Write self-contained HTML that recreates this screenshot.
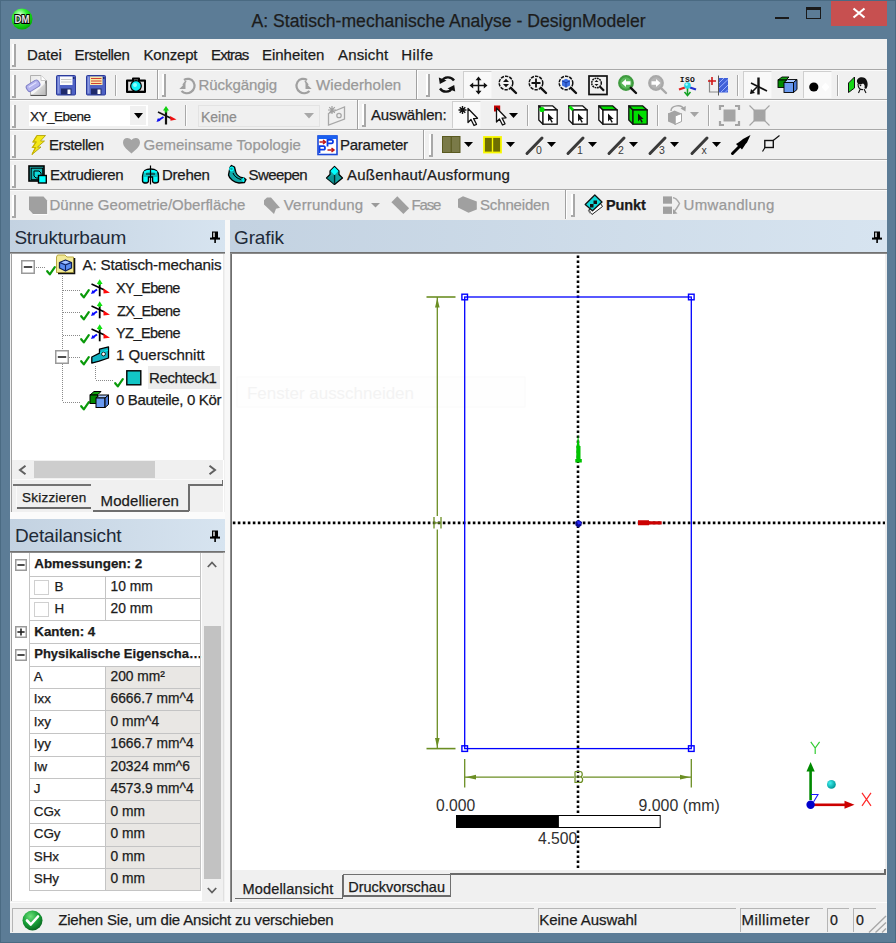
<!DOCTYPE html>
<html><head><meta charset="utf-8"><style>
html,body{margin:0;padding:0;width:896px;height:943px;overflow:hidden;background:#5c7c96}
.t{position:absolute;white-space:nowrap;line-height:1;font-family:"Liberation Sans", sans-serif;-webkit-text-stroke:0.25px currentColor}
svg{overflow:visible}
</style></head><body><div style="position:relative;width:896px;height:943px;overflow:hidden">
<div style="position:absolute;left:0px;top:0px;width:896px;height:943px;background:#5c7c96"></div>
<div style="position:absolute;left:0px;top:0px;width:896px;height:943px;border:1px solid #4a6a82;box-sizing:border-box"></div>
<svg style="position:absolute;left:11px;top:8px;" width="22" height="22" viewBox="0 0 22 22"><defs><radialGradient id="dmg" cx="40%" cy="30%" r="70%"><stop offset="0" stop-color="#e0ffe0"/><stop offset=".45" stop-color="#30f030"/><stop offset="1" stop-color="#00b000"/></radialGradient></defs><circle cx="11" cy="11" r="10.5" fill="url(#dmg)"/><text x="11" y="15.3" text-anchor="middle" font-family="Liberation Sans" font-weight="700" font-size="10.5" textLength="15" lengthAdjust="spacingAndGlyphs" fill="#e8e8e8" stroke="#000" stroke-width="2" paint-order="stroke">DM</text></svg>
<div class="t" style="left:251.50px;top:13px;font-size:17.6px;color:#1c1c1c;font-weight:400;">A: Statisch-mechanische Analyse - DesignModeler</div>
<div style="position:absolute;left:775px;top:17px;width:14px;height:2px;background:#1a1a1a"></div>
<div style="position:absolute;left:806px;top:7px;width:15px;height:12px;border:1px solid #1a1a1a;border-top-width:3px;box-sizing:border-box"></div>
<div style="position:absolute;left:831px;top:1px;width:56px;height:25px;background:#c75050"></div>
<svg style="position:absolute;left:852px;top:7px;" width="14" height="12" viewBox="0 0 14 12"><path d="M1.5 1.5 L12.5 10.5 M12.5 1.5 L1.5 10.5" stroke="#fff" stroke-width="2.2"/></svg>
<div style="position:absolute;left:10px;top:39px;width:877px;height:894px;background:#f0f0f0"></div>
<div style="position:absolute;left:10px;top:69px;width:877px;height:1px;background:#a9a9a9"></div>
<div style="position:absolute;left:10px;top:70px;width:877px;height:1px;background:#fbfbfb"></div>
<div style="position:absolute;left:10px;top:99px;width:877px;height:1px;background:#a9a9a9"></div>
<div style="position:absolute;left:10px;top:100px;width:877px;height:1px;background:#fbfbfb"></div>
<div style="position:absolute;left:10px;top:129px;width:877px;height:1px;background:#a9a9a9"></div>
<div style="position:absolute;left:10px;top:130px;width:877px;height:1px;background:#fbfbfb"></div>
<div style="position:absolute;left:10px;top:159px;width:877px;height:1px;background:#a9a9a9"></div>
<div style="position:absolute;left:10px;top:160px;width:877px;height:1px;background:#fbfbfb"></div>
<div style="position:absolute;left:10px;top:189px;width:877px;height:1px;background:#a9a9a9"></div>
<div style="position:absolute;left:10px;top:190px;width:877px;height:1px;background:#fbfbfb"></div>
<div style="position:absolute;left:12px;top:44px;width:2px;height:22px;background:#ffffff"></div>
<div style="position:absolute;left:14px;top:44px;width:1.5px;height:22px;background:#a8a8a8"></div>
<div style="position:absolute;left:12px;top:65px;width:3.5px;height:1.5px;background:#a8a8a8"></div>
<div style="position:absolute;left:12px;top:75px;width:2px;height:22px;background:#ffffff"></div>
<div style="position:absolute;left:14px;top:75px;width:1.5px;height:22px;background:#a8a8a8"></div>
<div style="position:absolute;left:12px;top:96px;width:3.5px;height:1.5px;background:#a8a8a8"></div>
<div style="position:absolute;left:12px;top:105px;width:2px;height:22px;background:#ffffff"></div>
<div style="position:absolute;left:14px;top:105px;width:1.5px;height:22px;background:#a8a8a8"></div>
<div style="position:absolute;left:12px;top:126px;width:3.5px;height:1.5px;background:#a8a8a8"></div>
<div style="position:absolute;left:12px;top:135px;width:2px;height:22px;background:#ffffff"></div>
<div style="position:absolute;left:14px;top:135px;width:1.5px;height:22px;background:#a8a8a8"></div>
<div style="position:absolute;left:12px;top:156px;width:3.5px;height:1.5px;background:#a8a8a8"></div>
<div style="position:absolute;left:12px;top:165px;width:2px;height:22px;background:#ffffff"></div>
<div style="position:absolute;left:14px;top:165px;width:1.5px;height:22px;background:#a8a8a8"></div>
<div style="position:absolute;left:12px;top:186px;width:3.5px;height:1.5px;background:#a8a8a8"></div>
<div style="position:absolute;left:12px;top:195px;width:2px;height:22px;background:#ffffff"></div>
<div style="position:absolute;left:14px;top:195px;width:1.5px;height:22px;background:#a8a8a8"></div>
<div style="position:absolute;left:12px;top:216px;width:3.5px;height:1.5px;background:#a8a8a8"></div>
<div class="t" style="left:27.00px;top:47px;font-size:15.0px;color:#1b1b1b;font-weight:400;letter-spacing:-0.062px;">Datei</div>
<div class="t" style="left:74.50px;top:47px;font-size:15.0px;color:#1b1b1b;font-weight:400;letter-spacing:-0.375px;">Erstellen</div>
<div class="t" style="left:143.50px;top:47px;font-size:15.0px;color:#1b1b1b;font-weight:400;letter-spacing:-0.167px;">Konzept</div>
<div class="t" style="left:211.00px;top:47px;font-size:15.0px;color:#1b1b1b;font-weight:400;letter-spacing:-0.850px;">Extras</div>
<div class="t" style="left:262.00px;top:47px;font-size:15.0px;color:#1b1b1b;font-weight:400;letter-spacing:-0.031px;">Einheiten</div>
<div class="t" style="left:338.00px;top:47px;font-size:15.0px;color:#1b1b1b;font-weight:400;letter-spacing:0.167px;">Ansicht</div>
<div class="t" style="left:401.30px;top:47px;font-size:15.0px;color:#1b1b1b;font-weight:400;letter-spacing:0.450px;">Hilfe</div>
<svg style="position:absolute;left:26px;top:75px;" width="21" height="21" viewBox="0 0 21 21"><defs><linearGradient id="docg" x1="0" y1="0" x2="1" y2="1"><stop offset="0" stop-color="#e8e8e8"/><stop offset=".6" stop-color="#f8f8f8"/><stop offset="1" stop-color="#9a9a9a"/></linearGradient></defs><path d="M4.5 0.5 H15 L20 5.5 V20 H4.5 Z" fill="url(#docg)" stroke="#b0b0b0" stroke-width="1"/><path d="M20 5.5 V20.5 H4.5" stroke="#555" stroke-width="1.2" fill="none"/><path d="M15 0.5 V5.5 H20" fill="#fff" stroke="#c8c8c8"/><path d="M6 20 L20 8 V20 Z" fill="#c8c8c8" opacity=".6"/><g transform="translate(7.5 10.5) rotate(-32)"><rect x="-7.5" y="-3.5" width="14" height="7" rx="2.5" fill="#b4b4ee" stroke="#8080c8" stroke-width="1"/><path d="M-5 -1 H4" stroke="#e0e0ff" stroke-width="1.2"/></g></svg>
<svg style="position:absolute;left:56px;top:75px;" width="20" height="21" viewBox="0 0 20 21"><rect x="0.5" y="0.5" width="19" height="19.5" rx="1" fill="#4f62c4" stroke="#2b3a9a" stroke-width="1"/><rect x="1.5" y="1.5" width="2" height="17" fill="#8b9ae0"/><rect x="4" y="1.5" width="12.5" height="8.5" fill="#fbfbfb"/><path d="M5 4.5H15.5M5 7H15.5" stroke="#c8c8c8" stroke-width="1"/><rect x="5" y="13.5" width="10.5" height="6" fill="#1f2a6a"/><rect x="11.5" y="14.5" width="3" height="4.5" fill="#fff"/><rect x="17" y="2" width="1.5" height="2" fill="#1f2a6a"/></svg>
<svg style="position:absolute;left:86px;top:75px;" width="20" height="21" viewBox="0 0 20 21"><rect x="0.5" y="0.5" width="19" height="19.5" rx="1" fill="#4f62c4" stroke="#2b3a9a" stroke-width="1"/><rect x="1.5" y="1.5" width="2" height="17" fill="#8b9ae0"/><rect x="4" y="1.5" width="12.5" height="8.5" fill="#f7e7a8"/><path d="M5 3.5H15.5M5 6H15.5M5 8.5H15.5" stroke="#d04030" stroke-width="1"/><rect x="5" y="13.5" width="10.5" height="6" fill="#1f2a6a"/><rect x="11.5" y="14.5" width="3" height="4.5" fill="#fff"/><rect x="17" y="2" width="1.5" height="2" fill="#1f2a6a"/></svg>
<svg style="position:absolute;left:126px;top:77px;" width="21" height="17" viewBox="0 0 21 17"><path d="M7 1.5 H13 V3.5 H19 V15 H1 V3.5 H7 Z" fill="#9a9a9a" stroke="#000" stroke-width="2" stroke-linejoin="round"/><rect x="2.5" y="5" width="3" height="8" fill="#e0e0e0"/><rect x="15" y="5" width="3" height="8" fill="#e0e0e0"/><circle cx="10" cy="9" r="5.3" fill="#10f0f8" stroke="#000" stroke-width="1.2"/><circle cx="9" cy="8" r="2" fill="#8ffcff"/></svg>
<svg style="position:absolute;left:178px;top:76px;" width="19" height="20" viewBox="0 0 19 20"><path d="M6 4 C9 2 13.5 2.5 15.5 6 C17.5 9.5 16.5 14 13 16 C10 18 6 17.5 3.5 15" stroke="#a0a0a0" stroke-width="2.2" fill="none"/><path d="M7.5 6.8 V13 H1.3 Z" fill="#a0a0a0"/><path d="M5 9 L8 5" stroke="#a0a0a0" stroke-width="1.5"/></svg>
<svg style="position:absolute;left:294px;top:76px;" width="19" height="20" viewBox="0 0 19 20"><g transform="translate(19 0) scale(-1 1)"><path d="M6 4 C9 2 13.5 2.5 15.5 6 C17.5 9.5 16.5 14 13 16 C10 18 6 17.5 3.5 15" stroke="#a0a0a0" stroke-width="2.2" fill="none"/><path d="M7.5 6.8 V13 H1.3 Z" fill="#a0a0a0"/><path d="M5 9 L8 5" stroke="#a0a0a0" stroke-width="1.5"/></g></svg>
<svg style="position:absolute;left:438px;top:75px;" width="18" height="20" viewBox="0 0 18 20"><path d="M16 5.5 C13 1 6 1.5 4 6" stroke="#111" stroke-width="2.4" fill="none"/><path d="M0.8 2.5 L8.5 5.5 L1.8 9 Z" fill="#111"/><path d="M2 13.5 C5 18 12 17.5 14 13" stroke="#111" stroke-width="2.4" fill="none"/><path d="M17.2 16.5 L9.5 13.5 L16.2 10 Z" fill="#111"/></svg>
<div style="position:absolute;left:463px;top:71px;width:29px;height:27px;background:#f9f9f9;border-top:1px solid #cfcfcf;border-left:1px solid #cfcfcf;border-right:1px solid #f4f4f4;box-sizing:border-box"></div>
<svg style="position:absolute;left:469px;top:76px;" width="19" height="19" viewBox="0 0 19 19"><path d="M9.5 3 V16 M3 9.5 H16" stroke="#111" stroke-width="1.5"/><path d="M9.5 0.5 L6.5 4.2 H12.5 Z M9.5 18.5 L6.5 14.8 H12.5 Z M0.5 9.5 L4.2 6.5 V12.5 Z M18.5 9.5 L14.8 6.5 V12.5 Z" fill="#111"/></svg>
<svg style="position:absolute;left:498px;top:75px;" width="20" height="20" viewBox="0 0 20 20"><circle cx="8" cy="8" r="6.8" fill="none" stroke="#111" stroke-width="1.5" stroke-dasharray="3.4 1"/><path d="M8 3.8 L5 7 H11 Z M8 12.2 L5 9 H11 Z" fill="#111"/><path d="M12.8 12.8 L18 18" stroke="#111" stroke-width="2.4" stroke-linecap="round"/></svg>
<svg style="position:absolute;left:528px;top:75px;" width="20" height="20" viewBox="0 0 20 20"><circle cx="8" cy="8" r="6.8" fill="none" stroke="#111" stroke-width="1.5" stroke-dasharray="3.4 1"/><path d="M8 3.5 V12.5 M3.5 8 H12.5" stroke="#111" stroke-width="1.8"/><path d="M12.8 12.8 L18 18" stroke="#111" stroke-width="2.4" stroke-linecap="round"/></svg>
<svg style="position:absolute;left:558px;top:75px;" width="20" height="20" viewBox="0 0 20 20"><circle cx="8" cy="8" r="6.8" fill="none" stroke="#111" stroke-width="1.5" stroke-dasharray="3.4 1"/><path d="M8 3.8 L12 5.8 V10.5 L8 12.5 L4 10.5 V5.8 Z" fill="#3d6fe0"/><path d="M4 5.8 L8 7.8 L12 5.8 M8 7.8 V12.5" stroke="#1a3aa0" stroke-width="1" fill="none"/><path d="M12.8 12.8 L18 18" stroke="#111" stroke-width="2.4" stroke-linecap="round"/></svg>
<svg style="position:absolute;left:588px;top:75px;" width="20" height="20" viewBox="0 0 20 20"><rect x="1" y="1" width="18" height="18.5" fill="none" stroke="#111" stroke-width="1.7"/><circle cx="8.5" cy="8" r="4.8" fill="none" stroke="#111" stroke-width="1.5" stroke-dasharray="1.8 .7"/><path d="M8.5 5 L6.5 7 H10.5 Z M8.5 11 L6.5 9 H10.5 Z" fill="#111"/><path d="M11.8 11.5 L16 15.8" stroke="#111" stroke-width="2.2"/></svg>
<svg style="position:absolute;left:618px;top:75px;" width="20" height="20" viewBox="0 0 20 20"><circle cx="8" cy="8" r="6.8" fill="#5ab85a" stroke="#3e9a3e" stroke-width="2.2" /><path d="M3.5 8 L8 4 V6.3 H12.5 V9.7 H8 V12 Z" fill="#fff"/><path d="M12.8 12.8 L18 18" stroke="#111" stroke-width="2.4" stroke-linecap="round"/></svg>
<svg style="position:absolute;left:648px;top:75px;" width="20" height="20" viewBox="0 0 20 20"><circle cx="8" cy="8" r="6.8" fill="#b4b4b4" stroke="#a8a8a8" stroke-width="2.2" /><path d="M12.5 8 L8 4 V6.3 H3.5 V9.7 H8 V12 Z" fill="#fff"/><path d="M12.8 12.8 L18 18" stroke="#a8a8a8" stroke-width="2.4" stroke-linecap="round"/></svg>
<svg style="position:absolute;left:677px;top:75px;" width="21" height="21" viewBox="0 0 21 21"><text x="10.5" y="6.6" text-anchor="middle" font-family="Liberation Mono" font-weight="700" font-size="8" fill="#111" letter-spacing=".3">ISO</text><path d="M10.5 10 V19.5" stroke="#10a020" stroke-width="1.6"/><path d="M7.5 17 L10.5 20.5 L13.5 17" stroke="#10a020" stroke-width="1.5" fill="none"/><path d="M2 14.5 L8 12.5" stroke="#e02020" stroke-width="2.2"/><path d="M13 12.5 L19 14.5" stroke="#2030d0" stroke-width="2.2"/><circle cx="10.5" cy="10.5" r="3.3" fill="#28d8e8"/><circle cx="9.6" cy="9.5" r="1.2" fill="#b0ffff"/></svg>
<svg style="position:absolute;left:707px;top:75px;" width="22" height="21" viewBox="0 0 22 21"><path d="M2.5 4.5 V17 H12" stroke="#8a8a8a" stroke-width="1.2" fill="none"/><rect x="11" y="3" width="10" height="14.5" fill="#4060d8"/><path d="M11 9 L17 3 M11 14 L21 4.5 M13.5 17.5 L21 10 M18 17.5 L21 14.5" stroke="#9ab0ff" stroke-width="1"/><path d="M11.5 0.5 V20.5" stroke="#555" stroke-width="1"/><path d="M1 6 H9 M5 2 V10" stroke="#d01818" stroke-width="1.6"/></svg>
<div style="position:absolute;left:743px;top:71px;width:29px;height:27px;background:#f9f9f9;border-top:1px solid #cfcfcf;border-left:1px solid #cfcfcf;border-right:1px solid #f4f4f4;box-sizing:border-box"></div>
<svg style="position:absolute;left:749px;top:77px;" width="20" height="18" viewBox="0 0 20 18"><path d="M9.5 0.5 V17.5" stroke="#111" stroke-width="2.4"/><path d="M2 6 L18 14" stroke="#111" stroke-width="1.6"/><path d="M8 10 L2 16" stroke="#111" stroke-width="1.6"/><path d="M1 17 L2 12 L6 16 Z" fill="#111"/></svg>
<svg style="position:absolute;left:777px;top:76px;" width="21" height="18" viewBox="0 0 21 18"><path d="M1 4 L5 1 H12 L9 4 Z" fill="#10a010" stroke="#000" stroke-width=".9"/><rect x="1" y="4" width="8" height="7.5" fill="#008a00" stroke="#000" stroke-width=".9"/><path d="M7 6.5 L10.5 3.5 H20 L16.5 6.5 Z" fill="#a8c8ff" stroke="#000" stroke-width=".9"/><rect x="7" y="6.5" width="9.5" height="10" fill="#6a9af0" stroke="#000" stroke-width=".9"/><path d="M16.5 6.5 L20 3.5 V13.5 L16.5 16.5 Z" fill="#4a7ad8" stroke="#000" stroke-width=".9"/></svg>
<div style="position:absolute;left:803px;top:71px;width:29px;height:27px;background:#f9f9f9;border-top:1px solid #cfcfcf;border-left:1px solid #cfcfcf;border-right:1px solid #f4f4f4;box-sizing:border-box"></div>
<svg style="position:absolute;left:808px;top:81px;" width="22" height="12" viewBox="0 0 22 12"><circle cx="5.8" cy="6" r="4.6" fill="#000"/><path d="M17.5 1.5 L21.5 6 L17.5 10.5 L13.5 6 Z" fill="#fff"/></svg>
<svg style="position:absolute;left:847px;top:76px;" width="23" height="18" viewBox="0 0 23 18"><path d="M1.5 7 L7.5 1 V12 L1.5 16.5 Z" fill="#18d818" stroke="#111" stroke-width="1"/><path d="M10 6 C9 1 18 -1 20 5 C21.5 9 20 12 19 13 L17.5 12 C18 10 17.5 8 16 7.5 C14 9 12 8.5 11 8 Z" fill="#111"/><path d="M11 8 C11 12 13 14 16 13.5 M13 13.5 L11.5 17 M17 13 L19 17" stroke="#111" stroke-width="1.1" fill="none"/><circle cx="13.5" cy="9.5" r=".8" fill="#111"/></svg>
<div style="position:absolute;left:157px;top:70px;width:1px;height:29px;background:#a0a0a0"></div>
<div style="position:absolute;left:158px;top:70px;width:1px;height:29px;background:#ffffff"></div>
<div style="position:absolute;left:162px;top:74px;width:2px;height:22px;background:#ffffff"></div>
<div style="position:absolute;left:164px;top:74px;width:1.5px;height:22px;background:#a8a8a8"></div>
<div style="position:absolute;left:162px;top:95px;width:3.5px;height:1.5px;background:#a8a8a8"></div>
<div class="t" style="left:198.50px;top:77px;font-size:15.0px;color:#999999;font-weight:400;letter-spacing:-0.056px;">Rückgängig</div>
<div class="t" style="left:316.00px;top:77px;font-size:15.0px;color:#999999;font-weight:400;letter-spacing:0.100px;">Wiederholen</div>
<div style="position:absolute;left:416px;top:70px;width:1px;height:29px;background:#a0a0a0"></div>
<div style="position:absolute;left:417px;top:70px;width:1px;height:29px;background:#ffffff"></div>
<div style="position:absolute;left:426px;top:74px;width:2px;height:22px;background:#ffffff"></div>
<div style="position:absolute;left:428px;top:74px;width:1.5px;height:22px;background:#a8a8a8"></div>
<div style="position:absolute;left:426px;top:95px;width:3.5px;height:1.5px;background:#a8a8a8"></div>
<div style="position:absolute;left:115px;top:75px;width:1px;height:21px;background:#a9a9a9"></div>
<div style="position:absolute;left:116px;top:75px;width:1px;height:21px;background:#fdfdfd"></div>
<div style="position:absolute;left:737px;top:75px;width:1px;height:21px;background:#a9a9a9"></div>
<div style="position:absolute;left:738px;top:75px;width:1px;height:21px;background:#fdfdfd"></div>
<div style="position:absolute;left:837px;top:75px;width:1px;height:21px;background:#a9a9a9"></div>
<div style="position:absolute;left:838px;top:75px;width:1px;height:21px;background:#fdfdfd"></div>
<div style="position:absolute;left:29px;top:105px;width:119px;height:21px;background:#fff"></div>
<div style="position:absolute;left:130px;top:106px;width:16px;height:19px;background:#f0f0f0"></div>
<svg style="position:absolute;left:134px;top:113px;" width="9" height="6" viewBox="0 0 9 6"><path d="M0 0 H9 L4.5 5.5 Z" fill="#000"/></svg>
<div class="t" style="left:30.00px;top:110px;font-size:13.5px;color:#1b1b1b;font-weight:400;letter-spacing:-0.514px;">XY_Ebene</div>
<div style="position:absolute;left:185px;top:105px;width:1px;height:21px;background:#a9a9a9"></div>
<div style="position:absolute;left:186px;top:105px;width:1px;height:21px;background:#fdfdfd"></div>
<div style="position:absolute;left:198px;top:105px;width:122px;height:22px;border:1px solid #e3e3e3;box-sizing:border-box;background:#f0f0f0"></div>
<div class="t" style="left:201.00px;top:110px;font-size:14.0px;color:#8d8d8d;font-weight:400;letter-spacing:0.000px;">Keine</div>
<svg style="position:absolute;left:304px;top:113px;" width="10" height="6" viewBox="0 0 10 6"><path d="M0 0 H10 L5 5.5 Z" fill="#a8a8a8"/></svg>
<div style="position:absolute;left:357px;top:100px;width:1px;height:29px;background:#a0a0a0"></div>
<div style="position:absolute;left:358px;top:100px;width:1px;height:29px;background:#ffffff"></div>
<div style="position:absolute;left:362px;top:104px;width:2px;height:22px;background:#ffffff"></div>
<div style="position:absolute;left:364px;top:104px;width:1.5px;height:22px;background:#a8a8a8"></div>
<div style="position:absolute;left:362px;top:125px;width:3.5px;height:1.5px;background:#a8a8a8"></div>
<div class="t" style="left:371.00px;top:107px;font-size:15.0px;color:#1b1b1b;font-weight:400;letter-spacing:-0.222px;">Auswählen:</div>
<div style="position:absolute;left:527px;top:105px;width:1px;height:21px;background:#a9a9a9"></div>
<div style="position:absolute;left:528px;top:105px;width:1px;height:21px;background:#fdfdfd"></div>
<div style="position:absolute;left:657px;top:105px;width:1px;height:21px;background:#a9a9a9"></div>
<div style="position:absolute;left:658px;top:105px;width:1px;height:21px;background:#fdfdfd"></div>
<div style="position:absolute;left:708px;top:105px;width:1px;height:21px;background:#a9a9a9"></div>
<div style="position:absolute;left:709px;top:105px;width:1px;height:21px;background:#fdfdfd"></div>
<div class="t" style="left:49.00px;top:137px;font-size:15.0px;color:#1b1b1b;font-weight:400;letter-spacing:-0.406px;">Erstellen</div>
<div class="t" style="left:143.50px;top:137px;font-size:15.0px;color:#999999;font-weight:400;letter-spacing:0.000px;">Gemeinsame Topologie</div>
<div class="t" style="left:340.00px;top:137px;font-size:15.0px;color:#1b1b1b;font-weight:400;letter-spacing:-0.250px;">Parameter</div>
<div style="position:absolute;left:423px;top:130px;width:1px;height:29px;background:#a0a0a0"></div>
<div style="position:absolute;left:424px;top:130px;width:1px;height:29px;background:#ffffff"></div>
<div style="position:absolute;left:429px;top:134px;width:2px;height:22px;background:#ffffff"></div>
<div style="position:absolute;left:431px;top:134px;width:1.5px;height:22px;background:#a8a8a8"></div>
<div style="position:absolute;left:429px;top:155px;width:3.5px;height:1.5px;background:#a8a8a8"></div>
<div class="t" style="left:50.00px;top:167px;font-size:15.0px;color:#1b1b1b;font-weight:400;letter-spacing:-0.300px;">Extrudieren</div>
<div class="t" style="left:162.00px;top:167px;font-size:15.0px;color:#1b1b1b;font-weight:400;letter-spacing:-0.250px;">Drehen</div>
<div class="t" style="left:248.50px;top:167px;font-size:15.0px;color:#1b1b1b;font-weight:400;letter-spacing:-0.583px;">Sweepen</div>
<div class="t" style="left:347.00px;top:167px;font-size:15.0px;color:#1b1b1b;font-weight:400;letter-spacing:0.237px;">Außenhaut/Ausformung</div>
<div class="t" style="left:49.50px;top:197px;font-size:15.0px;color:#999999;font-weight:400;letter-spacing:0.000px;">Dünne Geometrie/Oberfläche</div>
<div class="t" style="left:283.75px;top:197px;font-size:15.0px;color:#999999;font-weight:400;letter-spacing:0.194px;">Verrundung</div>
<svg style="position:absolute;left:371px;top:203px;" width="9" height="5" viewBox="0 0 9 5"><path d="M0 0 H9 L4.5 4.5 Z" fill="#9a9a9a"/></svg>
<div class="t" style="left:411.50px;top:197px;font-size:15.0px;color:#999999;font-weight:400;letter-spacing:-1.167px;">Fase</div>
<div class="t" style="left:480.00px;top:197px;font-size:15.0px;color:#999999;font-weight:400;letter-spacing:-0.156px;">Schneiden</div>
<div style="position:absolute;left:565px;top:190px;width:1px;height:29px;background:#a0a0a0"></div>
<div style="position:absolute;left:566px;top:190px;width:1px;height:29px;background:#ffffff"></div>
<div style="position:absolute;left:571px;top:194px;width:2px;height:22px;background:#ffffff"></div>
<div style="position:absolute;left:573px;top:194px;width:1.5px;height:22px;background:#a8a8a8"></div>
<div style="position:absolute;left:571px;top:215px;width:3.5px;height:1.5px;background:#a8a8a8"></div>
<div class="t" style="left:606.00px;top:198px;font-size:14.5px;color:#1b1b1b;font-weight:700;letter-spacing:-0.125px;">Punkt</div>
<div class="t" style="left:683.50px;top:197px;font-size:15.0px;color:#999999;font-weight:400;letter-spacing:0.361px;">Umwandlung</div>
<svg style="position:absolute;left:156px;top:106px;" width="21" height="19" viewBox="0 0 21 19"><path d="M10 2.5 V18.5" stroke="#111" stroke-width="2.2"/><path d="M2 6 L15 12.2" stroke="#111" stroke-width="1.6"/><path d="M7 4.5 L10 0 L13 4.5 Z" fill="#10d010"/><rect x="8.8" y="3.5" width="2.4" height="3" fill="#10d010"/><path d="M14 10 L20.5 13.5 L14.5 14.8 Z" fill="#f01010"/><path d="M7.5 11 L2 14.5" stroke="#1010f0" stroke-width="2"/><path d="M0.5 16 L2 12 L4.5 14.8 Z" fill="#1010f0"/></svg>
<svg style="position:absolute;left:327px;top:105px;" width="20" height="21" viewBox="0 0 20 21"><path d="M1.5 8.5 L17.5 2 V14 L1.5 20 Z" fill="none" stroke="#a8a8a8" stroke-width="1.3"/><circle cx="12" cy="10.5" r="2.2" fill="none" stroke="#a8a8a8" stroke-width="1.3"/><path d="M5 1 V9 M1 5 H9 M2.2 2.2 L7.8 7.8 M7.8 2.2 L2.2 7.8" stroke="#a0a0a0" stroke-width="1.2"/></svg>
<div style="position:absolute;left:452px;top:101px;width:29px;height:27px;background:#f9f9f9;border-top:1px solid #cfcfcf;border-left:1px solid #cfcfcf;border-right:1px solid #f4f4f4;box-sizing:border-box"></div>
<svg style="position:absolute;left:457px;top:105px;" width="23" height="21" viewBox="0 0 23 21"><path d="M5.5 1 V9 M1.5 5 H9.5 M2.7 2.2 L8.3 7.8 M8.3 2.2 L2.7 7.8" stroke="#111" stroke-width="1.4"/><path d="M11 3.5 V17.5 L14 14.5 L17 20.5 L19.5 19.3 L16.6 13.6 L20.5 13.3 Z" fill="#fff" stroke="#111" stroke-width="1.3" stroke-linejoin="round"/></svg>
<svg style="position:absolute;left:493px;top:105px;" width="16" height="20" viewBox="0 0 16 20"><rect x="1" y="0.5" width="6.2" height="6" fill="#c00000"/><path d="M3.5 3 V17 L6.5 14 L9.5 20 L12 18.8 L9.1 13.1 L13 12.8 Z" fill="#fff" stroke="#111" stroke-width="1.3" stroke-linejoin="round"/></svg>
<svg style="position:absolute;left:509px;top:113px;" width="9" height="6" viewBox="0 0 9 6"><path d="M0 0 H9 L4.5 5 Z" fill="#000"/></svg>
<svg style="position:absolute;left:538px;top:105px;" width="20" height="20" viewBox="0 0 20 20"><path d="M0.8 0.8 L5 5 V19.2 L0.8 15 Z" fill="#fff" stroke="#111" stroke-width="1.3" stroke-linejoin="round"/><path d="M0.8 0.8 H14.5 L19.2 5 H5 Z" fill="#fff" stroke="#111" stroke-width="1.3" stroke-linejoin="round"/><rect x="5" y="5" width="14.2" height="14.2" fill="#fff" stroke="#111" stroke-width="1.3"/><path d="M10 8.5 V16.5 L11.8 14.6 L13.6 17.8 L14.8 17.1 L13.2 14.1 L15.6 14 Z" fill="#111"/><circle cx="4" cy="4.5" r="2.6" fill="#00e000"/></svg>
<svg style="position:absolute;left:568px;top:105px;" width="20" height="20" viewBox="0 0 20 20"><path d="M0.8 0.8 L5 5 V19.2 L0.8 15 Z" fill="#fff" stroke="#111" stroke-width="1.3" stroke-linejoin="round"/><path d="M0.8 0.8 H14.5 L19.2 5 H5 Z" fill="#fff" stroke="#111" stroke-width="1.3" stroke-linejoin="round"/><rect x="5" y="5" width="14.2" height="14.2" fill="#fff" stroke="#111" stroke-width="1.3"/><path d="M10 8.5 V16.5 L11.8 14.6 L13.6 17.8 L14.8 17.1 L13.2 14.1 L15.6 14 Z" fill="#111"/><path d="M1.5 1.5 L5 5" stroke="#00e000" stroke-width="2.8"/></svg>
<svg style="position:absolute;left:598px;top:105px;" width="20" height="20" viewBox="0 0 20 20"><path d="M0.8 0.8 L5 5 V19.2 L0.8 15 Z" fill="#fff" stroke="#111" stroke-width="1.3" stroke-linejoin="round"/><path d="M0.8 0.8 H14.5 L19.2 5 H5 Z" fill="#00e000" stroke="#111" stroke-width="1.3" stroke-linejoin="round"/><rect x="5" y="5" width="14.2" height="14.2" fill="#fff" stroke="#111" stroke-width="1.3"/><path d="M10 8.5 V16.5 L11.8 14.6 L13.6 17.8 L14.8 17.1 L13.2 14.1 L15.6 14 Z" fill="#111"/></svg>
<svg style="position:absolute;left:628px;top:105px;" width="20" height="20" viewBox="0 0 20 20"><path d="M0.8 0.8 L5 5 V19.2 L0.8 15 Z" fill="#00e000" stroke="#111" stroke-width="1.3" stroke-linejoin="round"/><path d="M0.8 0.8 H14.5 L19.2 5 H5 Z" fill="#00e000" stroke="#111" stroke-width="1.3" stroke-linejoin="round"/><rect x="5" y="5" width="14.2" height="14.2" fill="#00e000" stroke="#111" stroke-width="1.3"/><path d="M10 8.5 V16.5 L11.8 14.6 L13.6 17.8 L14.8 17.1 L13.2 14.1 L15.6 14 Z" fill="#111"/></svg>
<svg style="position:absolute;left:667px;top:104px;" width="21" height="21" viewBox="0 0 21 21"><path d="M1 9.5 L7.5 6.5 L14.5 9.5 V17.5 L8 20.5 L1 17.5 Z" fill="#a4a4a4"/><path d="M8 12 L14.5 9.5 V17.5 L8 20.5 Z" fill="#fff" stroke="#a4a4a4" stroke-width="1"/><path d="M1 9.5 L8 12 V20.5" stroke="#a4a4a4" fill="none"/><path d="M4 7 C4 1 15 0 16.5 5" stroke="#a4a4a4" stroke-width="1.4" fill="none"/><path d="M13.5 4.5 L18.5 7.5 L18.8 2 Z" fill="#a4a4a4"/></svg>
<svg style="position:absolute;left:690px;top:112px;" width="9" height="6" viewBox="0 0 9 6"><path d="M0 0 H9 L4.5 5 Z" fill="#a4a4a4"/></svg>
<svg style="position:absolute;left:719px;top:105px;" width="21" height="21" viewBox="0 0 21 21"><rect x="4.5" y="4.5" width="12" height="12" fill="#a4a4a4"/><path d="M1 5 V1 H5 M16 1 H20 V5 M20 16 V20 H16 M5 20 H1 V16" stroke="#a4a4a4" stroke-width="2.2" fill="none"/></svg>
<svg style="position:absolute;left:749px;top:105px;" width="21" height="21" viewBox="0 0 21 21"><rect x="4.5" y="4.5" width="12" height="12" fill="#a4a4a4"/><path d="M0.5 0.5 L20.5 20.5 M20.5 0.5 L0.5 20.5" stroke="#a4a4a4" stroke-width="1.2"/></svg>
<svg style="position:absolute;left:31px;top:135px;" width="15" height="20" viewBox="0 0 15 20"><path d="M6 0.5 H14.5 L9.5 6 H13.5 L6.5 12 H10 L1 19.5 L4.5 12.5 H1.5 L5 7 H2 Z" fill="#f4e818" stroke="#a89a00" stroke-width=".8" stroke-linejoin="round"/><path d="M6 0.5 L2 7 H5 L1.5 12.5 H4.5 L1 19.5" stroke="#c8b400" stroke-width="1.2" fill="none"/></svg>
<svg style="position:absolute;left:122px;top:137px;" width="19" height="17" viewBox="0 0 19 17"><path d="M9.5 3 C7 0 1 0 1 5.5 C1 10 6 13 9.5 16.5 C13 13 18 10 18 5.5 C18 0 12 0 9.5 3 Z" fill="#a4a4a4"/></svg>
<svg style="position:absolute;left:317px;top:135px;" width="21" height="20" viewBox="0 0 21 20"><rect x="1" y="1" width="19" height="18.5" fill="#fff" stroke="#1a48d8" stroke-width="1.6"/><rect x="1" y="0.5" width="19" height="3.5" fill="#1a60f0"/><path d="M2.5 7 H8 M6 5 L8.5 7 L6 9" stroke="#c01818" stroke-width="1.5" fill="none"/><path d="M10.5 15 H16.5 M14.5 13 L17 15 L14.5 17" stroke="#c01818" stroke-width="1.5" fill="none"/><path d="M10.5 11.5 V4.8 H14.5 C16.5 4.8 16.5 8.3 14.5 8.3 H10.5" stroke="#0a3ee8" stroke-width="1.8" fill="none"/><path d="M2.5 18 V11.2 H6.5 C8.5 11.2 8.5 14.7 6.5 14.7 H2.5" stroke="#0a3ee8" stroke-width="1.8" fill="none"/></svg>
<svg style="position:absolute;left:442px;top:136px;" width="19" height="17" viewBox="0 0 19 17"><rect x="0.5" y="0.5" width="17.5" height="16" fill="#7a7a48" stroke="#5a5a20" stroke-width="1"/><path d="M9.25 0.5 V16.5" stroke="#5a5a20" stroke-width="1.2"/></svg>
<svg style="position:absolute;left:464px;top:142px;" width="9" height="6" viewBox="0 0 9 6"><path d="M0 0 H9 L4.5 5 Z" fill="#000"/></svg>
<svg style="position:absolute;left:483px;top:136px;" width="19" height="17" viewBox="0 0 19 17"><rect x="1" y="1" width="17" height="15.5" fill="#6e6e00" stroke="#f8f800" stroke-width="1.8"/><path d="M9.5 1 V16.5" stroke="#f8f800" stroke-width="1.4"/></svg>
<svg style="position:absolute;left:506px;top:142px;" width="9" height="6" viewBox="0 0 9 6"><path d="M0 0 H9 L4.5 5 Z" fill="#000"/></svg>
<svg style="position:absolute;left:525px;top:135px;" width="22" height="20" viewBox="0 0 22 20"><path d="M2 18.5 L17 3" stroke="#3a3a3a" stroke-width="3" stroke-linecap="round"/><text x="14" y="18.8" text-anchor="middle" font-family="Liberation Sans" font-size="10.5" fill="#3a3a3a">0</text></svg>
<svg style="position:absolute;left:547px;top:142px;" width="9" height="6" viewBox="0 0 9 6"><path d="M0 0 H9 L4.5 5 Z" fill="#000"/></svg>
<svg style="position:absolute;left:566px;top:135px;" width="22" height="20" viewBox="0 0 22 20"><path d="M2 18.5 L17 3" stroke="#3a3a3a" stroke-width="3" stroke-linecap="round"/><text x="14" y="18.8" text-anchor="middle" font-family="Liberation Sans" font-size="10.5" fill="#3a3a3a">1</text></svg>
<svg style="position:absolute;left:588px;top:142px;" width="9" height="6" viewBox="0 0 9 6"><path d="M0 0 H9 L4.5 5 Z" fill="#000"/></svg>
<svg style="position:absolute;left:607px;top:135px;" width="22" height="20" viewBox="0 0 22 20"><path d="M2 18.5 L17 3" stroke="#3a3a3a" stroke-width="3" stroke-linecap="round"/><text x="14" y="18.8" text-anchor="middle" font-family="Liberation Sans" font-size="10.5" fill="#3a3a3a">2</text></svg>
<svg style="position:absolute;left:629px;top:142px;" width="9" height="6" viewBox="0 0 9 6"><path d="M0 0 H9 L4.5 5 Z" fill="#000"/></svg>
<svg style="position:absolute;left:648px;top:135px;" width="22" height="20" viewBox="0 0 22 20"><path d="M2 18.5 L17 3" stroke="#3a3a3a" stroke-width="3" stroke-linecap="round"/><text x="14" y="18.8" text-anchor="middle" font-family="Liberation Sans" font-size="10.5" fill="#3a3a3a">3</text></svg>
<svg style="position:absolute;left:670px;top:142px;" width="9" height="6" viewBox="0 0 9 6"><path d="M0 0 H9 L4.5 5 Z" fill="#000"/></svg>
<svg style="position:absolute;left:690px;top:135px;" width="22" height="20" viewBox="0 0 22 20"><path d="M2 18.5 L17 3" stroke="#3a3a3a" stroke-width="3" stroke-linecap="round"/><text x="14" y="18.8" text-anchor="middle" font-family="Liberation Sans" font-size="10.5" fill="#3a3a3a">x</text></svg>
<svg style="position:absolute;left:712px;top:142px;" width="9" height="6" viewBox="0 0 9 6"><path d="M0 0 H9 L4.5 5 Z" fill="#000"/></svg>
<svg style="position:absolute;left:731px;top:134px;" width="21" height="21" viewBox="0 0 21 21"><path d="M1.5 19.5 L8 13" stroke="#000" stroke-width="3" stroke-linecap="round"/><path d="M5 10 C8 8 10 7 12 5 L19.5 1 L16 8.5 C14 10.5 13 12.5 11 15.5 L9.5 14 L7 12 Z" fill="#000"/></svg>
<svg style="position:absolute;left:762px;top:135px;" width="18" height="17" viewBox="0 0 18 17"><rect x="2.8" y="5.5" width="8.5" height="7" fill="none" stroke="#111" stroke-width="1.4"/><path d="M0.5 16.5 L3 12.5 M11.2 5.5 L17.5 0.5" stroke="#111" stroke-width="1.2"/></svg>
<svg style="position:absolute;left:28px;top:165px;" width="20" height="19" viewBox="0 0 20 19"><rect x="1" y="1" width="15" height="15" fill="#1aa6a6" stroke="#000" stroke-width="1.6"/><rect x="3.2" y="3.2" width="11.5" height="11.5" fill="#10b8b8" stroke="#000" stroke-width="1"/><path d="M6 6 H11 L13 8 V13 H8 L6 11 Z" fill="#0fd8d8" stroke="#000" stroke-width="1"/><rect x="10.5" y="10.5" width="7.8" height="7.5" fill="#00ffff" stroke="#000" stroke-width="1.4"/></svg>
<svg style="position:absolute;left:141px;top:165px;" width="19" height="20" viewBox="0 0 19 20"><path d="M1.5 16 V11 C1.5 6 5 4 9.5 4 C14 4 17.5 6 17.5 11 V16 C17.5 17.5 16 18 14 18 C12 18 11.5 17 11.5 15.5 V12 H7.5 V15.5 C7.5 17 7 18 5 18 C3 18 1.5 17.5 1.5 16 Z" fill="#10c0c0" stroke="#000" stroke-width="1.3"/><rect x="2.8" y="12" width="3.5" height="4.5" fill="#00ffff"/><rect x="12.7" y="12" width="3.5" height="4.5" fill="#00ffff"/><path d="M3 7.5 C6 5 13 5 16 7.5" stroke="#00ffff" stroke-width="2" fill="none"/><path d="M9.5 0.5 V19.5 M5 9 H14" stroke="#000" stroke-width="1.2"/></svg>
<svg style="position:absolute;left:227px;top:165px;" width="20" height="19" viewBox="0 0 20 19"><path d="M3 2.5 L4.5 0.5 L7.5 2 L8.5 6 C9 9 11 11 14 12.5 L17 13 L19 14.5 L17.5 17.5 L12 18 C7 17.5 2.5 14 1.5 10 Z" fill="#10a8a8" stroke="#000" stroke-width="1.3" stroke-linejoin="round"/><circle cx="4.6" cy="4" r="1.8" fill="none" stroke="#00ffff" stroke-width="1.3"/><path d="M17 13 C15.5 13.5 15.5 16 17 16.5" stroke="#00ffff" stroke-width="1.5" fill="none"/><path d="M6 8 C7 11 10 13.5 14 14.5" stroke="#000" stroke-width="1" fill="none"/></svg>
<svg style="position:absolute;left:326px;top:166px;" width="17" height="19" viewBox="0 0 17 19"><path d="M8.5 0.5 L13 5 V8.5 L16.5 12 L8.5 18.5 L0.5 12 L4 8.5 V5 Z" fill="#11a3a3" stroke="#000" stroke-width="1.2" stroke-linejoin="round"/><path d="M8.5 1 L12.5 5 L8.5 9 L4.5 5 Z" fill="#00ffff"/><path d="M8.5 9 V18.5" stroke="#000" stroke-width="1.4"/><path d="M0.5 12 L8.5 18.5 V9 Z" fill="#0c8a8a" opacity=".6"/></svg>
<svg style="position:absolute;left:28px;top:196px;" width="21" height="19" viewBox="0 0 21 19"><path d="M1 0.5 H15.5 L19.5 5 V18 H5 L1 13.5 Z" fill="#a0a0a0"/><path d="M19.8 5 V18.5 H5" stroke="#fcfcfc" stroke-width="1" fill="none"/></svg>
<svg style="position:absolute;left:263px;top:197px;" width="19" height="18" viewBox="0 0 19 18"><path d="M1 3.3 L4 0.5 H8 L17 10.8 L13 11.8 L11 16.9 L1 7.5 Z" fill="#a0a0a0"/></svg>
<svg style="position:absolute;left:391px;top:196px;" width="19" height="19" viewBox="0 0 19 19"><path d="M0.4 6.2 L6.3 0.2 L18.1 12.3 L12.4 17.9 Z" fill="#a0a0a0"/></svg>
<svg style="position:absolute;left:457px;top:196px;" width="21" height="18" viewBox="0 0 21 18"><path d="M1 3 L6 0.2 L19.8 5.5 V13.5 L11.5 16.8 L1 11.5 Z" fill="#a0a0a0"/></svg>
<svg style="position:absolute;left:584px;top:194px;" width="20" height="22" viewBox="0 0 20 22"><path d="M4.5 16 L16.5 9.5 L18.5 12.5 L8 20.5 Z" fill="#fff" stroke="#222" stroke-width="1"/><path d="M4.5 16 L6.5 19" stroke="#777" stroke-width="2"/><path d="M10.8 1 L18 8 L8.5 16.8 L1.2 10.5 Z" fill="#10d8d8" stroke="#111" stroke-width="1.3" stroke-linejoin="round"/><rect x="9.5" y="6.5" width="3.5" height="3.5" fill="#111"/><rect x="6" y="10" width="3.5" height="3.5" fill="#111"/></svg>
<svg style="position:absolute;left:662px;top:196px;" width="20" height="19" viewBox="0 0 20 19"><rect x="1" y="0.4" width="9" height="7.3" fill="#a0a0a0"/><rect x="1" y="10.6" width="9" height="7.3" fill="#a0a0a0"/><path d="M11 1.8 C14 1.8 15.5 4 17.5 7.5 C15.5 11 14.5 13 12.5 15" stroke="#a8a8a8" stroke-width="1.5" fill="none"/><path d="M11 13 L11 18 L15.5 17.5 Z" fill="#a0a0a0"/></svg>
<div style="position:absolute;left:225px;top:220px;width:5px;height:682px;background:#f8f8f8"></div>
<div style="position:absolute;left:10px;top:220px;width:215px;height:32px;background:linear-gradient(90deg,#c3d2e1,#d7e4f0)"></div>
<div style="position:absolute;left:10px;top:252px;width:215px;height:1px;background:#727272"></div>
<div style="position:absolute;left:10px;top:253px;width:215px;height:1px;background:#a0a0a0"></div>
<div class="t" style="left:14.40px;top:228px;font-size:19.0px;color:#1e2a38;font-weight:400;letter-spacing:-0.200px;-webkit-text-stroke:0">Strukturbaum</div>
<div style="position:absolute;left:230px;top:220px;width:657px;height:32px;background:linear-gradient(90deg,#c3d2e1,#d7e4f0)"></div>
<div style="position:absolute;left:230px;top:252px;width:657px;height:1px;background:#727272"></div>
<div style="position:absolute;left:230px;top:253px;width:657px;height:1px;background:#8a8a8a"></div>
<div class="t" style="left:234.00px;top:228px;font-size:19.0px;color:#1e2a38;font-weight:400;letter-spacing:-0.120px;-webkit-text-stroke:0">Grafik</div>
<svg style="position:absolute;left:210px;top:231px;" width="10" height="12" viewBox="0 0 10 12"><rect x="2" y="0.5" width="6" height="6.5" fill="#000"/><rect x="3.2" y="1.6" width="1.6" height="4.6" fill="#d8d8d8"/><rect x="0" y="6.6" width="10" height="2" fill="#000"/><rect x="4.3" y="8" width="1.6" height="4" fill="#000"/></svg>
<svg style="position:absolute;left:872px;top:231px;" width="10" height="12" viewBox="0 0 10 12"><rect x="2" y="0.5" width="6" height="6.5" fill="#000"/><rect x="3.2" y="1.6" width="1.6" height="4.6" fill="#d8d8d8"/><rect x="0" y="6.6" width="10" height="2" fill="#000"/><rect x="4.3" y="8" width="1.6" height="4" fill="#000"/></svg>
<div style="position:absolute;left:11px;top:254px;width:213px;height:258px;background:#fff"></div>
<div style="position:absolute;left:11px;top:254px;width:1px;height:258px;background:#a0a0a0"></div>
<div style="position:absolute;left:223px;top:254px;width:1px;height:206px;background:#e8e8e8"></div>
<svg style="position:absolute;left:21px;top:260px;" width="14" height="14" viewBox="0 0 14 14"><rect x="0.75" y="0.75" width="12.5" height="12.5" fill="#fff" stroke="#9a9a9a" stroke-width="1.5"/><path d="M2.8000000000000003 7.0 H11.200000000000001" stroke="#222" stroke-width="1.6"/></svg>
<div style="position:absolute;left:36px;top:267px;width:10px;height:1px;background:repeating-linear-gradient(90deg,#8a8a8a 0 1px,transparent 1px 2px)"></div>
<svg style="position:absolute;left:46px;top:266px;" width="10" height="10" viewBox="0 0 10 10"><path d="M1.2 5.2 L3.8 8.4 L8.8 1.2" stroke="#0a9a0a" stroke-width="2.2" fill="none" stroke-linecap="round" stroke-linejoin="round"/></svg>
<svg style="position:absolute;left:55px;top:254px;" width="21" height="21" viewBox="0 0 21 21"><path d="M1.5 3 L2.5 1 H10 L12 3 H18.5 V18.5 H1.5 Z" fill="#f2ea96" stroke="#b8a840" stroke-width="1"/><path d="M19.5 4 V19.5 H3" stroke="#111" stroke-width="1.6" fill="none"/><path d="M10.5 6 L16.5 8.5 V14 L10.5 17 L4.5 14 V8.5 Z" fill="#5a8cf0" stroke="#10205a" stroke-width="1.3" stroke-linejoin="round"/><path d="M4.5 8.5 L10.5 11 L16.5 8.5 M10.5 11 V17" stroke="#10205a" stroke-width="1.1" fill="none"/><path d="M6.5 8.3 L10.5 6.8 L14.5 8.3 L10.5 9.8 Z" fill="#a8c4ff"/></svg>
<div class="t" style="left:82.50px;top:257px;font-size:15.2px;color:#1b1b1b;font-weight:400;letter-spacing:-0.184px;">A: Statisch-mechanis</div>
<div style="position:absolute;left:62px;top:276px;width:1px;height:126px;background:repeating-linear-gradient(180deg,#8a8a8a 0 1px,transparent 1px 2px)"></div>
<div style="position:absolute;left:63px;top:290px;width:17px;height:1px;background:repeating-linear-gradient(90deg,#8a8a8a 0 1px,transparent 1px 2px)"></div>
<svg style="position:absolute;left:80px;top:289px;" width="10" height="10" viewBox="0 0 10 10"><path d="M1.2 5.2 L3.8 8.4 L8.8 1.2" stroke="#0a9a0a" stroke-width="2.2" fill="none" stroke-linecap="round" stroke-linejoin="round"/></svg>
<svg style="position:absolute;left:91px;top:279px;" width="20" height="18" viewBox="0 0 20 18"><path d="M8.7 3.5 V17.3" stroke="#000" stroke-width="1.8"/><path d="M0.5 5 L13.5 11" stroke="#000" stroke-width="1.5"/><path d="M5.8 5 L8.7 0.3 L11.6 5 Z" fill="#10e010"/><rect x="7.5" y="3" width="2.4" height="3" fill="#10e010"/><path d="M12.5 9.5 L19 13.8 L12.5 14.5 Z" fill="#ff0a0a"/><path d="M6 10.5 L1.5 13.5" stroke="#0a0aff" stroke-width="2"/><path d="M0 15 L1.5 11 L4 14 Z" fill="#0a0aff"/></svg>
<div class="t" style="left:116.00px;top:281px;font-size:14.5px;color:#1b1b1b;font-weight:400;letter-spacing:-0.714px;">XY_Ebene</div>
<div style="position:absolute;left:63px;top:312px;width:17px;height:1px;background:repeating-linear-gradient(90deg,#8a8a8a 0 1px,transparent 1px 2px)"></div>
<svg style="position:absolute;left:80px;top:311px;" width="10" height="10" viewBox="0 0 10 10"><path d="M1.2 5.2 L3.8 8.4 L8.8 1.2" stroke="#0a9a0a" stroke-width="2.2" fill="none" stroke-linecap="round" stroke-linejoin="round"/></svg>
<svg style="position:absolute;left:91px;top:301px;" width="20" height="18" viewBox="0 0 20 18"><path d="M8.7 3.5 V17.3" stroke="#000" stroke-width="1.8"/><path d="M0.5 5 L13.5 11" stroke="#000" stroke-width="1.5"/><path d="M5.8 5 L8.7 0.3 L11.6 5 Z" fill="#10e010"/><rect x="7.5" y="3" width="2.4" height="3" fill="#10e010"/><path d="M12.5 9.5 L19 13.8 L12.5 14.5 Z" fill="#ff0a0a"/><path d="M6 10.5 L1.5 13.5" stroke="#0a0aff" stroke-width="2"/><path d="M0 15 L1.5 11 L4 14 Z" fill="#0a0aff"/></svg>
<div class="t" style="left:117.00px;top:304px;font-size:14.5px;color:#1b1b1b;font-weight:400;letter-spacing:-0.714px;">ZX_Ebene</div>
<div style="position:absolute;left:63px;top:335px;width:17px;height:1px;background:repeating-linear-gradient(90deg,#8a8a8a 0 1px,transparent 1px 2px)"></div>
<svg style="position:absolute;left:80px;top:334px;" width="10" height="10" viewBox="0 0 10 10"><path d="M1.2 5.2 L3.8 8.4 L8.8 1.2" stroke="#0a9a0a" stroke-width="2.2" fill="none" stroke-linecap="round" stroke-linejoin="round"/></svg>
<svg style="position:absolute;left:91px;top:324px;" width="20" height="18" viewBox="0 0 20 18"><path d="M8.7 3.5 V17.3" stroke="#000" stroke-width="1.8"/><path d="M0.5 5 L13.5 11" stroke="#000" stroke-width="1.5"/><path d="M5.8 5 L8.7 0.3 L11.6 5 Z" fill="#10e010"/><rect x="7.5" y="3" width="2.4" height="3" fill="#10e010"/><path d="M12.5 9.5 L19 13.8 L12.5 14.5 Z" fill="#ff0a0a"/><path d="M6 10.5 L1.5 13.5" stroke="#0a0aff" stroke-width="2"/><path d="M0 15 L1.5 11 L4 14 Z" fill="#0a0aff"/></svg>
<div class="t" style="left:116.00px;top:326px;font-size:14.5px;color:#1b1b1b;font-weight:400;letter-spacing:-0.571px;">YZ_Ebene</div>
<svg style="position:absolute;left:55px;top:350px;" width="14" height="14" viewBox="0 0 14 14"><rect x="0.75" y="0.75" width="12.5" height="12.5" fill="#fff" stroke="#9a9a9a" stroke-width="1.5"/><path d="M2.8000000000000003 7.0 H11.200000000000001" stroke="#222" stroke-width="1.6"/></svg>
<div style="position:absolute;left:69px;top:357px;width:11px;height:1px;background:repeating-linear-gradient(90deg,#8a8a8a 0 1px,transparent 1px 2px)"></div>
<svg style="position:absolute;left:80px;top:356px;" width="10" height="10" viewBox="0 0 10 10"><path d="M1.2 5.2 L3.8 8.4 L8.8 1.2" stroke="#0a9a0a" stroke-width="2.2" fill="none" stroke-linecap="round" stroke-linejoin="round"/></svg>
<svg style="position:absolute;left:91px;top:346px;" width="19" height="18" viewBox="0 0 19 18"><path d="M0.8 11 L8.5 7.2 V3.2 L17.5 0.8 V12 L8.2 15.2 L0.8 17.2 Z" fill="#12b4c4" stroke="#000" stroke-width="1.3" stroke-linejoin="round"/><path d="M9 7 L17 4" stroke="#00f0f0" stroke-width="1.2"/><circle cx="12.5" cy="8" r="1.9" fill="#fff" stroke="#000" stroke-width=".8"/></svg>
<div class="t" style="left:116.00px;top:347px;font-size:15.0px;color:#1b1b1b;font-weight:400;letter-spacing:-0.042px;">1 Querschnitt</div>
<div style="position:absolute;left:95px;top:366px;width:1px;height:14px;background:repeating-linear-gradient(180deg,#8a8a8a 0 1px,transparent 1px 2px)"></div>
<div style="position:absolute;left:96px;top:380px;width:18px;height:1px;background:repeating-linear-gradient(90deg,#8a8a8a 0 1px,transparent 1px 2px)"></div>
<svg style="position:absolute;left:113.5px;top:378px;" width="10" height="10" viewBox="0 0 10 10"><path d="M1.2 5.2 L3.8 8.4 L8.8 1.2" stroke="#0a9a0a" stroke-width="2.2" fill="none" stroke-linecap="round" stroke-linejoin="round"/></svg>
<svg style="position:absolute;left:126px;top:370px;" width="16" height="16" viewBox="0 0 16 16"><rect x="0.8" y="0.8" width="14" height="14" fill="#12c6c6" stroke="#000" stroke-width="1.4"/></svg>
<div style="position:absolute;left:148px;top:366px;width:72px;height:23px;background:#ececec"></div>
<div class="t" style="left:149.00px;top:370px;font-size:15.0px;color:#1b1b1b;font-weight:400;letter-spacing:-0.375px;">Rechteck1</div>
<div style="position:absolute;left:63px;top:402px;width:17px;height:1px;background:repeating-linear-gradient(90deg,#8a8a8a 0 1px,transparent 1px 2px)"></div>
<svg style="position:absolute;left:80px;top:401px;" width="10" height="10" viewBox="0 0 10 10"><path d="M1.2 5.2 L3.8 8.4 L8.8 1.2" stroke="#0a9a0a" stroke-width="2.2" fill="none" stroke-linecap="round" stroke-linejoin="round"/></svg>
<svg style="position:absolute;left:89px;top:390px;" width="21" height="19" viewBox="0 0 21 19"><path d="M1 5 L5 1.5 H12 L8.5 5 Z" fill="#10a010" stroke="#000" stroke-width="1"/><rect x="1" y="5" width="7.5" height="8.5" fill="#008800" stroke="#000" stroke-width="1"/><path d="M7 8 L10.5 5 H19.5 L16 8 Z" fill="#a8c8ff" stroke="#000" stroke-width="1"/><rect x="7" y="8" width="9" height="9.5" fill="#6a9af0" stroke="#000" stroke-width="1"/><path d="M16 8 L19.5 5 V14.5 L16 17.5 Z" fill="#4a7ad8" stroke="#000" stroke-width="1"/></svg>
<div class="t" style="left:116.00px;top:392px;font-size:15.0px;color:#1b1b1b;font-weight:400;letter-spacing:-0.344px;">0 Bauteile, 0 Kör</div>
<div style="position:absolute;left:12px;top:460px;width:211px;height:19px;background:#f0f0f0"></div>
<div style="position:absolute;left:34px;top:461px;width:121px;height:17px;background:#cdcdcd"></div>
<svg style="position:absolute;left:18px;top:465px;" width="9" height="10" viewBox="0 0 9 10"><path d="M7.5 0.8 L2 5 L7.5 9.2" stroke="#606060" stroke-width="2" fill="none"/></svg>
<svg style="position:absolute;left:208px;top:465px;" width="9" height="10" viewBox="0 0 9 10"><path d="M1.5 0.8 L7 5 L1.5 9.2" stroke="#606060" stroke-width="2" fill="none"/></svg>
<div style="position:absolute;left:12px;top:479px;width:211px;height:33px;background:#f0f0f0"></div>
<div style="position:absolute;left:12px;top:479px;width:211px;height:1px;background:#fafafa"></div>
<div style="position:absolute;left:13px;top:484px;width:78px;height:2px;background:#747474"></div>
<div style="position:absolute;left:16px;top:486px;width:1px;height:21px;background:#fafafa"></div>
<div style="position:absolute;left:17px;top:507px;width:74px;height:2px;background:#6a6a6a"></div>
<div class="t" style="left:22.00px;top:491px;font-size:13.5px;color:#1b1b1b;font-weight:400;letter-spacing:0.222px;">Skizzieren</div>
<div style="position:absolute;left:93px;top:510px;width:96px;height:2px;background:#6e6e6e"></div>
<div style="position:absolute;left:188px;top:485px;width:1.5px;height:26px;background:#6e6e6e"></div>
<div style="position:absolute;left:188px;top:484px;width:35px;height:1.5px;background:#6e6e6e"></div>
<div style="position:absolute;left:221.5px;top:480px;width:1.5px;height:5px;background:#6e6e6e"></div>
<div class="t" style="left:100.60px;top:493px;font-size:15.0px;color:#1b1b1b;font-weight:400;letter-spacing:0.080px;">Modellieren</div>
<div style="position:absolute;left:10px;top:512px;width:215px;height:7px;background:#fbfbfb"></div>
<div style="position:absolute;left:10px;top:519px;width:215px;height:32px;background:linear-gradient(90deg,#c3d2e1,#d7e4f0)"></div>
<div style="position:absolute;left:10px;top:551px;width:215px;height:1px;background:#727272"></div>
<div style="position:absolute;left:10px;top:552px;width:215px;height:1px;background:#a0a0a0"></div>
<div class="t" style="left:15.00px;top:526px;font-size:19.0px;color:#1e2a38;font-weight:400;letter-spacing:-0.183px;-webkit-text-stroke:0">Detailansicht</div>
<svg style="position:absolute;left:210px;top:530px;" width="10" height="12" viewBox="0 0 10 12"><rect x="2" y="0.5" width="6" height="6.5" fill="#000"/><rect x="3.2" y="1.6" width="1.6" height="4.6" fill="#d8d8d8"/><rect x="0" y="6.6" width="10" height="2" fill="#000"/><rect x="4.3" y="8" width="1.6" height="4" fill="#000"/></svg>
<div style="position:absolute;left:11px;top:553px;width:212px;height:348px;background:#fff"></div>
<div style="position:absolute;left:11px;top:553px;width:1px;height:348px;background:#a0a0a0"></div>
<svg style="position:absolute;left:15px;top:559px;" width="12" height="12" viewBox="0 0 12 12"><rect x="0.75" y="0.75" width="10.5" height="10.5" fill="#fff" stroke="#9a9a9a" stroke-width="1.5"/><path d="M2.4000000000000004 6.0 H9.600000000000001" stroke="#222" stroke-width="1.6"/></svg>
<div class="t" style="left:34.25px;top:557px;font-size:13.4px;color:#1b1b1b;font-weight:700;">Abmessungen: 2</div>
<div style="position:absolute;left:34px;top:580px;width:15px;height:15px;border:1px solid #d0d0d0;box-sizing:border-box;background:#fff"></div>
<div class="t" style="left:54.50px;top:580px;font-size:13.4px;color:#1b1b1b;font-weight:400;">B</div>
<div class="t" style="left:110.50px;top:580px;font-size:13.8px;color:#1b1b1b;font-weight:400;">10 mm</div>
<div style="position:absolute;left:34px;top:602px;width:15px;height:15px;border:1px solid #d0d0d0;box-sizing:border-box;background:#fff"></div>
<div class="t" style="left:54.50px;top:602px;font-size:13.4px;color:#1b1b1b;font-weight:400;">H</div>
<div class="t" style="left:110.50px;top:602px;font-size:13.8px;color:#1b1b1b;font-weight:400;">20 mm</div>
<svg style="position:absolute;left:15px;top:626px;" width="12" height="12" viewBox="0 0 12 12"><rect x="0.75" y="0.75" width="10.5" height="10.5" fill="#fff" stroke="#9a9a9a" stroke-width="1.5"/><path d="M2.4000000000000004 6.0 H9.600000000000001" stroke="#222" stroke-width="1.6"/><path d="M6.0 2.4000000000000004 V9.600000000000001" stroke="#222" stroke-width="1.6"/></svg>
<div class="t" style="left:34.25px;top:625px;font-size:13.4px;color:#1b1b1b;font-weight:700;">Kanten: 4</div>
<svg style="position:absolute;left:15px;top:649px;" width="12" height="12" viewBox="0 0 12 12"><rect x="0.75" y="0.75" width="10.5" height="10.5" fill="#fff" stroke="#9a9a9a" stroke-width="1.5"/><path d="M2.4000000000000004 6.0 H9.600000000000001" stroke="#222" stroke-width="1.6"/></svg>
<div class="t" style="left:34.25px;top:647px;font-size:13.0px;color:#1b1b1b;font-weight:700;">Physikalische Eigenscha…</div>
<div style="position:absolute;left:106px;top:667px;width:95px;height:21px;background:#e9e7e4"></div>
<div class="t" style="left:33.75px;top:670px;font-size:13.4px;color:#1b1b1b;font-weight:400;">A</div>
<div class="t" style="left:110.50px;top:670px;font-size:13.8px;color:#1b1b1b;font-weight:400;">200 mm²</div>
<div style="position:absolute;left:106px;top:689px;width:95px;height:21px;background:#e9e7e4"></div>
<div class="t" style="left:33.75px;top:692px;font-size:13.4px;color:#1b1b1b;font-weight:400;">Ixx</div>
<div class="t" style="left:110.50px;top:692px;font-size:13.8px;color:#1b1b1b;font-weight:400;">6666.7 mm^4</div>
<div style="position:absolute;left:106px;top:711px;width:95px;height:22px;background:#e9e7e4"></div>
<div class="t" style="left:33.75px;top:715px;font-size:13.4px;color:#1b1b1b;font-weight:400;">Ixy</div>
<div class="t" style="left:110.50px;top:715px;font-size:13.8px;color:#1b1b1b;font-weight:400;">0 mm^4</div>
<div style="position:absolute;left:106px;top:734px;width:95px;height:22px;background:#e9e7e4"></div>
<div class="t" style="left:33.75px;top:737px;font-size:13.4px;color:#1b1b1b;font-weight:400;">Iyy</div>
<div class="t" style="left:110.50px;top:737px;font-size:13.8px;color:#1b1b1b;font-weight:400;">1666.7 mm^4</div>
<div style="position:absolute;left:106px;top:757px;width:95px;height:21px;background:#e9e7e4"></div>
<div class="t" style="left:33.75px;top:760px;font-size:13.4px;color:#1b1b1b;font-weight:400;">Iw</div>
<div class="t" style="left:110.50px;top:760px;font-size:13.8px;color:#1b1b1b;font-weight:400;">20324 mm^6</div>
<div style="position:absolute;left:106px;top:779px;width:95px;height:21px;background:#e9e7e4"></div>
<div class="t" style="left:33.75px;top:782px;font-size:13.4px;color:#1b1b1b;font-weight:400;">J</div>
<div class="t" style="left:110.50px;top:782px;font-size:13.8px;color:#1b1b1b;font-weight:400;">4573.9 mm^4</div>
<div style="position:absolute;left:106px;top:801px;width:95px;height:22px;background:#e9e7e4"></div>
<div class="t" style="left:33.75px;top:805px;font-size:13.4px;color:#1b1b1b;font-weight:400;">CGx</div>
<div class="t" style="left:110.50px;top:805px;font-size:13.8px;color:#1b1b1b;font-weight:400;">0 mm</div>
<div style="position:absolute;left:106px;top:824px;width:95px;height:22px;background:#e9e7e4"></div>
<div class="t" style="left:33.75px;top:827px;font-size:13.4px;color:#1b1b1b;font-weight:400;">CGy</div>
<div class="t" style="left:110.50px;top:827px;font-size:13.8px;color:#1b1b1b;font-weight:400;">0 mm</div>
<div style="position:absolute;left:106px;top:847px;width:95px;height:21px;background:#e9e7e4"></div>
<div class="t" style="left:33.75px;top:850px;font-size:13.4px;color:#1b1b1b;font-weight:400;">SHx</div>
<div class="t" style="left:110.50px;top:850px;font-size:13.8px;color:#1b1b1b;font-weight:400;">0 mm</div>
<div style="position:absolute;left:106px;top:869px;width:95px;height:21px;background:#e9e7e4"></div>
<div class="t" style="left:33.75px;top:872px;font-size:13.4px;color:#1b1b1b;font-weight:400;">SHy</div>
<div class="t" style="left:110.50px;top:872px;font-size:13.8px;color:#1b1b1b;font-weight:400;">0 mm</div>
<div style="position:absolute;left:29px;top:552px;width:172px;height:1px;background:#c4c4c4"></div>
<div style="position:absolute;left:29px;top:576px;width:172px;height:1px;background:#c4c4c4"></div>
<div style="position:absolute;left:29px;top:598px;width:172px;height:1px;background:#c4c4c4"></div>
<div style="position:absolute;left:29px;top:620px;width:172px;height:1px;background:#c4c4c4"></div>
<div style="position:absolute;left:29px;top:643px;width:172px;height:1px;background:#c4c4c4"></div>
<div style="position:absolute;left:29px;top:666px;width:172px;height:1px;background:#c4c4c4"></div>
<div style="position:absolute;left:29px;top:688px;width:172px;height:1px;background:#c4c4c4"></div>
<div style="position:absolute;left:29px;top:710px;width:172px;height:1px;background:#c4c4c4"></div>
<div style="position:absolute;left:29px;top:733px;width:172px;height:1px;background:#c4c4c4"></div>
<div style="position:absolute;left:29px;top:756px;width:172px;height:1px;background:#c4c4c4"></div>
<div style="position:absolute;left:29px;top:778px;width:172px;height:1px;background:#c4c4c4"></div>
<div style="position:absolute;left:29px;top:800px;width:172px;height:1px;background:#c4c4c4"></div>
<div style="position:absolute;left:29px;top:823px;width:172px;height:1px;background:#c4c4c4"></div>
<div style="position:absolute;left:29px;top:846px;width:172px;height:1px;background:#c4c4c4"></div>
<div style="position:absolute;left:29px;top:868px;width:172px;height:1px;background:#c4c4c4"></div>
<div style="position:absolute;left:29px;top:890px;width:172px;height:1px;background:#c4c4c4"></div>
<div style="position:absolute;left:11px;top:552px;width:212px;height:1px;background:#8a8a8a"></div>
<div style="position:absolute;left:29px;top:553px;width:1px;height:338px;background:#c4c4c4"></div>
<div style="position:absolute;left:200px;top:553px;width:1px;height:338px;background:#c4c4c4"></div>
<div style="position:absolute;left:105px;top:576px;width:1px;height:22px;background:#c4c4c4"></div>
<div style="position:absolute;left:105px;top:598px;width:1px;height:22px;background:#c4c4c4"></div>
<div style="position:absolute;left:105px;top:666px;width:1px;height:22px;background:#c4c4c4"></div>
<div style="position:absolute;left:105px;top:688px;width:1px;height:22px;background:#c4c4c4"></div>
<div style="position:absolute;left:105px;top:710px;width:1px;height:23px;background:#c4c4c4"></div>
<div style="position:absolute;left:105px;top:733px;width:1px;height:23px;background:#c4c4c4"></div>
<div style="position:absolute;left:105px;top:756px;width:1px;height:22px;background:#c4c4c4"></div>
<div style="position:absolute;left:105px;top:778px;width:1px;height:22px;background:#c4c4c4"></div>
<div style="position:absolute;left:105px;top:800px;width:1px;height:23px;background:#c4c4c4"></div>
<div style="position:absolute;left:105px;top:823px;width:1px;height:23px;background:#c4c4c4"></div>
<div style="position:absolute;left:105px;top:846px;width:1px;height:22px;background:#c4c4c4"></div>
<div style="position:absolute;left:105px;top:868px;width:1px;height:22px;background:#c4c4c4"></div>
<div style="position:absolute;left:202px;top:553px;width:21px;height:348px;background:#f0f0f0"></div>
<div style="position:absolute;left:204px;top:626px;width:17px;height:253px;background:#c2c2c2"></div>
<svg style="position:absolute;left:207px;top:561px;" width="10" height="7" viewBox="0 0 10 7"><path d="M0.8 6 L5 1.5 L9.2 6" stroke="#606060" stroke-width="1.8" fill="none"/></svg>
<svg style="position:absolute;left:207px;top:887px;" width="10" height="7" viewBox="0 0 10 7"><path d="M0.8 1 L5 5.5 L9.2 1" stroke="#606060" stroke-width="1.8" fill="none"/></svg>
<div style="position:absolute;left:223px;top:553px;width:1px;height:348px;background:#e0e0e0"></div>
<div style="position:absolute;left:230px;top:254px;width:657px;height:617px;background:#fff"></div>
<div style="position:absolute;left:230px;top:254px;width:1px;height:648px;background:#8c8c8c"></div>
<div style="position:absolute;left:231px;top:254px;width:1px;height:648px;background:#6e6e6e"></div>
<svg style="position:absolute;left:232px;top:254px" width="653" height="616" viewBox="232 254 653 616"><rect x="237" y="377" width="288" height="30" fill="#fefefe" stroke="#fafafa"/><text x="247" y="399" font-family="Liberation Sans" font-size="16.5" textLength="167" lengthAdjust="spacingAndGlyphs" fill="#f3f3f3">Fenster ausschneiden</text><path d="M578 254 V870" stroke="#000" stroke-width="2.6" stroke-dasharray="2.6 2.4" stroke-dashoffset="3.6"/><path d="M232 522.9 H885" stroke="#000" stroke-width="2.6" stroke-dasharray="2.6 2.4" stroke-dashoffset="4.2"/><rect x="464.7" y="297" width="226.6" height="451.6" fill="none" stroke="#0000ff" stroke-width="1.3"/><rect x="461.9" y="294.2" width="5.6" height="5.6" fill="none" stroke="#0000ff" stroke-width="1.4"/><rect x="688.5" y="294.2" width="5.6" height="5.6" fill="none" stroke="#0000ff" stroke-width="1.4"/><rect x="461.9" y="745.8000000000001" width="5.6" height="5.6" fill="none" stroke="#0000ff" stroke-width="1.4"/><rect x="688.5" y="745.8000000000001" width="5.6" height="5.6" fill="none" stroke="#0000ff" stroke-width="1.4"/><path d="M426.5 297 L455.5 297" stroke="#6b8e23" stroke-width="1.6" /><path d="M426.5 748.6 L455.5 748.6" stroke="#6b8e23" stroke-width="1.6" /><path d="M437.3 297 L437.3 516" stroke="#6b8e23" stroke-width="1.3" /><path d="M437.3 529.5 L437.3 748.6" stroke="#6b8e23" stroke-width="1.3" /><path d="M437.3 298 L435 307.5 H439.6 Z" fill="#6b8e23"/><path d="M437.3 747.6 L435 738 H439.6 Z" fill="#6b8e23"/><path d="M434 517 V528.5 M441 517 V528.5 M434 522.8 H441" stroke="#6b8e23" stroke-width="1.3" fill="none"/><path d="M464.7 759 L464.7 787.5" stroke="#6b8e23" stroke-width="1.3" /><path d="M691.3 759 L691.3 787.5" stroke="#6b8e23" stroke-width="1.3" /><path d="M464.7 777.2 L574 777.2" stroke="#6b8e23" stroke-width="1.3" /><path d="M583 777.2 L691.3 777.2" stroke="#6b8e23" stroke-width="1.3" /><path d="M465.7 777.2 L476 774.8 V779.6 Z" fill="#6b8e23"/><path d="M690.3 777.2 L680 774.8 V779.6 Z" fill="#6b8e23"/><path d="M575 771.5 V782.5 H580 C583.5 782.5 583.5 777 580 777 H575 M580 777 C583 777 583 771.5 580 771.5 H575" stroke="#6b8e23" stroke-width="1.2" fill="none"/><path d="M578.1 434.5 L579.6 446 H580.5 V459 H581.8 V462.5 H575.3 V459 H576.3 V446 H576.6 Z" fill="#00c400"/><path d="M638 520.2 H649 V521.3 H661.7 V524.5 H649 V525.3 H638 Z" fill="#cc0000"/><path d="M578.5 519.8 L582 522 L581.5 525.5 L578.5 527.8 L575.5 525.5 L575.2 522 Z" fill="#0a0a90"/><path d="M577 521 L580.5 521.5 L581 524 L578 524.5 Z" fill="#2a2aff"/><rect x="456.5" y="815.5" width="203.7" height="12" fill="#fff" stroke="#000" stroke-width="1"/><rect x="456.5" y="815.5" width="102.4" height="12" fill="#000"/><text x="436" y="811.4" font-family="Liberation Sans" font-size="15.7" fill="#303030">0.000</text><text x="638.5" y="811.3" font-family="Liberation Sans" font-size="15.9" fill="#303030">9.000 (mm)</text><text x="538" y="843.6" font-family="Liberation Sans" font-size="15.7" fill="#303030">4.500</text><path d="M810.6 800 V770" stroke="#008a00" stroke-width="2.6"/><path d="M810.6 762 L806.5 771.5 H814.7 Z" fill="#008a00"/><path d="M814 804.8 H845" stroke="#cc0000" stroke-width="2.6"/><path d="M854.5 804.8 L844.5 800.8 V808.8 Z" fill="#cc0000"/><circle cx="810.6" cy="804.8" r="4.2" fill="#0000cc"/><path d="M811 794.5 H818 L813.5 802" stroke="#1a1aff" stroke-width="1.1" fill="none"/><path d="M810.8 741.8 L815.2 748 L819.6 741.8 M815.2 748 V754" stroke="#33cc33" stroke-width="1.2" fill="none"/><path d="M862 792.8 L871 805.8 M871 792.8 L862 805.8" stroke="#ff2a2a" stroke-width="1.2" fill="none"/><defs><radialGradient id="cys" cx="35%" cy="35%" r="65%"><stop offset="0" stop-color="#40f0f0"/><stop offset="1" stop-color="#009a9a"/></radialGradient></defs><circle cx="831.4" cy="784.4" r="4.4" fill="url(#cys)"/></svg>
<div style="position:absolute;left:885px;top:254px;width:2px;height:616px;background:#ededed"></div>
<div style="position:absolute;left:232px;top:870px;width:655px;height:32px;background:#f0f0f0"></div>
<div style="position:absolute;left:450px;top:873px;width:436px;height:2px;background:#6a6a6a"></div>
<div style="position:absolute;left:884px;top:869px;width:2px;height:5px;background:#6a6a6a"></div>
<div style="position:absolute;left:343px;top:874px;width:108px;height:23px;border:1px solid #707070;border-bottom:2px solid #6a6a6a;box-sizing:border-box;background:#f0f0f0"></div>
<div style="position:absolute;left:235px;top:898px;width:108px;height:1px;background:#6a6a6a"></div>
<div style="position:absolute;left:342px;top:875px;width:1px;height:24px;background:#6a6a6a"></div>
<div class="t" style="left:242.40px;top:882px;font-size:14.5px;color:#1b1b1b;font-weight:400;letter-spacing:0.192px;">Modellansicht</div>
<div class="t" style="left:348.20px;top:880px;font-size:14.5px;color:#1b1b1b;font-weight:400;letter-spacing:0.008px;">Druckvorschau</div>
<div style="position:absolute;left:10px;top:902px;width:877px;height:1px;background:#fbfbfb"></div>
<div style="position:absolute;left:12px;top:908px;width:522px;height:24px;border-top:1px solid #b5b5b5;border-left:1px solid #b5b5b5;box-sizing:border-box"></div>
<div style="position:absolute;left:538px;top:908px;width:198px;height:24px;border-top:1px solid #b5b5b5;border-left:1px solid #b5b5b5;box-sizing:border-box"></div>
<div style="position:absolute;left:740px;top:908px;width:83px;height:24px;border-top:1px solid #b5b5b5;border-left:1px solid #b5b5b5;box-sizing:border-box"></div>
<div style="position:absolute;left:827px;top:908px;width:22px;height:24px;border-top:1px solid #b5b5b5;border-left:1px solid #b5b5b5;box-sizing:border-box"></div>
<div style="position:absolute;left:853px;top:908px;width:23px;height:24px;border-top:1px solid #b5b5b5;border-left:1px solid #b5b5b5;box-sizing:border-box"></div>
<svg style="position:absolute;left:22px;top:910px;" width="21" height="21" viewBox="0 0 21 21"><defs><radialGradient id="stg" cx="40%" cy="30%" r="70%"><stop offset="0" stop-color="#6ee07a"/><stop offset=".55" stop-color="#1aa33a"/><stop offset="1" stop-color="#0a6a20"/></radialGradient></defs><circle cx="10.5" cy="10.5" r="10" fill="url(#stg)"/><path d="M5 10.5 L8.8 14.5 L16 6.5" stroke="#fff" stroke-width="2.6" fill="none" stroke-linecap="round" stroke-linejoin="round"/></svg>
<div class="t" style="left:58.20px;top:912px;font-size:15.0px;color:#1b1b1b;font-weight:400;letter-spacing:-0.180px;">Ziehen Sie, um die Ansicht zu verschieben</div>
<div class="t" style="left:539.30px;top:912px;font-size:15.0px;color:#1b1b1b;font-weight:400;letter-spacing:-0.042px;">Keine Auswahl</div>
<div class="t" style="left:741.60px;top:912px;font-size:15.0px;color:#1b1b1b;font-weight:400;letter-spacing:0.422px;">Millimeter</div>
<div class="t" style="left:830.00px;top:913px;font-size:14.2px;color:#1b1b1b;font-weight:400;">0</div>
<div class="t" style="left:856.00px;top:913px;font-size:14.2px;color:#1b1b1b;font-weight:400;">0</div>
<svg style="position:absolute;left:866px;top:913px;" width="21" height="20" viewBox="0 0 21 20"><path d="M3 19.5 L20 3 M9.5 19.5 L20 9.5 M16 19.5 L20 15.5" stroke="#a8a8a8" stroke-width="1.4"/></svg>
</div></body></html>
